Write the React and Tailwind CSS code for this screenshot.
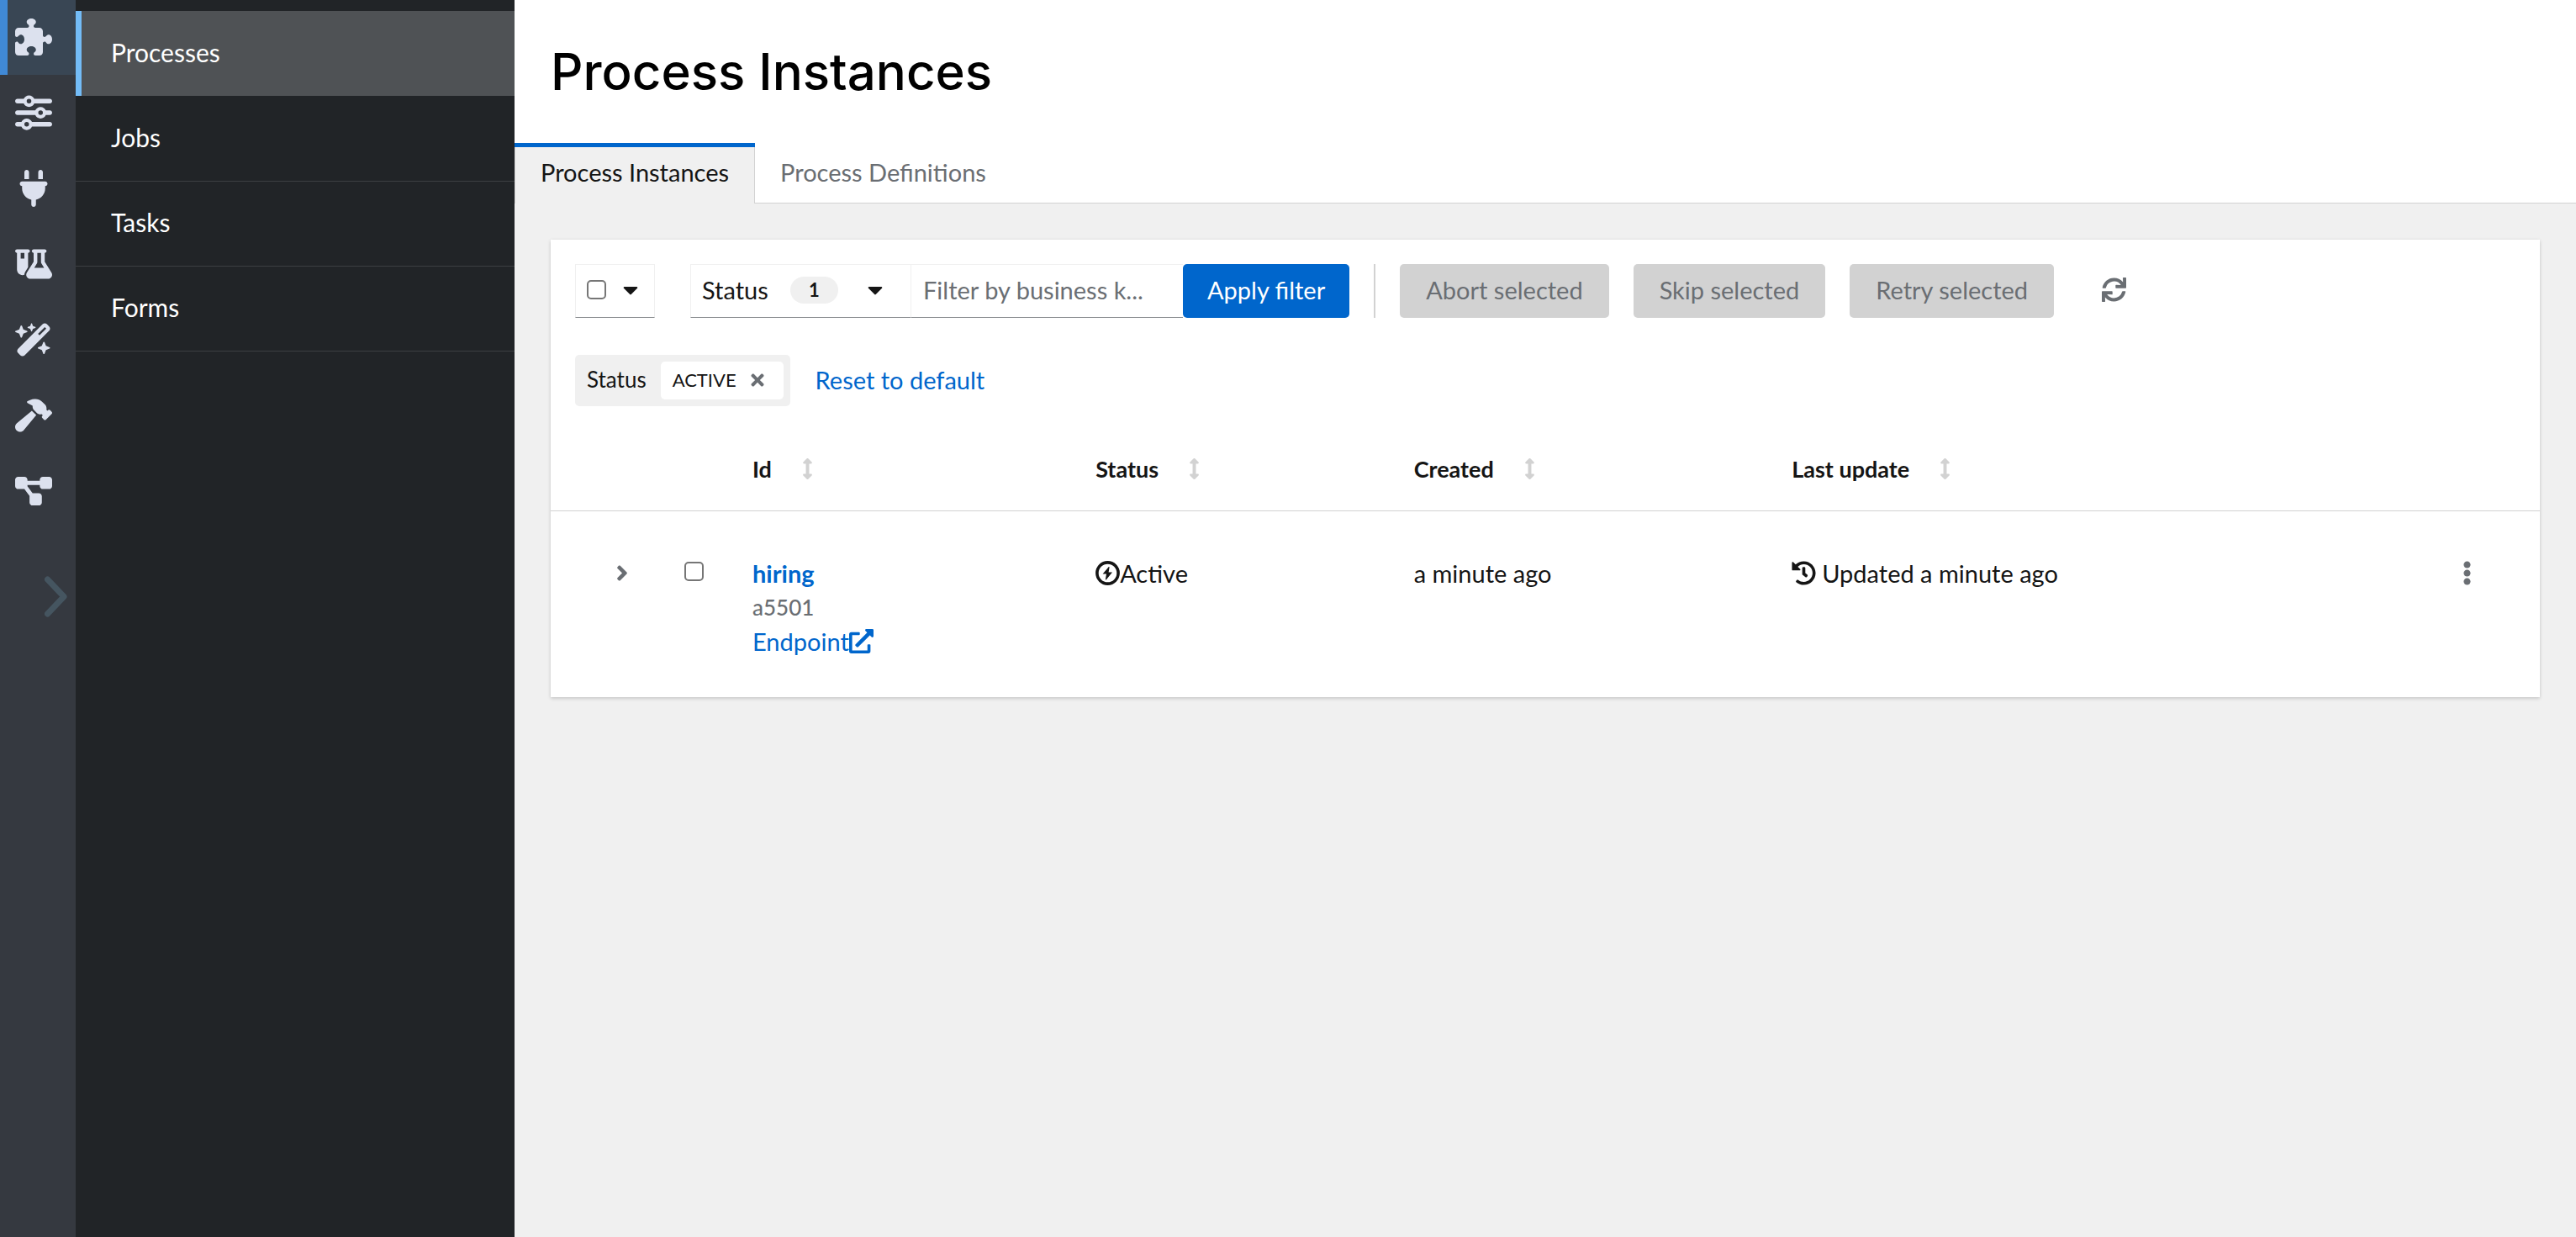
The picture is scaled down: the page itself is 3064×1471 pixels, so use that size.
import {
  FaPuzzlePiece,
  FaSliders,
  FaPlug,
  FaFlaskVial,
  FaWandMagicSparkles,
  FaHammer,
  FaDiagramProject,
} from 'react-icons/fa6';
import {
  FaAngleRight,
  FaArrowsAltV,
  FaCaretDown,
  FaEllipsisV,
  FaExternalLinkAlt,
  FaHistory,
  FaSync,
  FaTimes,
} from 'react-icons/fa';

const railItems = [
  { label: 'Extensions', Icon: FaPuzzlePiece, active: true },
  { label: 'Configuration', Icon: FaSliders },
  { label: 'Endpoints', Icon: FaPlug },
  { label: 'Continuous testing', Icon: FaFlaskVial },
  { label: 'Dev services', Icon: FaWandMagicSparkles },
  { label: 'Build metrics', Icon: FaHammer },
  { label: 'Workflows', Icon: FaDiagramProject },
];

function Rail() {
  return (
    <nav aria-label="Tools" className="flex w-[90px] shrink-0 flex-col bg-[#353940]">
      <ul className="flex flex-col gap-px">
        {railItems.map(({ label, Icon, active }) => (
          <li key={label}>
            <a
              href="#"
              aria-label={label}
              className={
                active
                  ? 'flex h-[89px] items-center bg-[#394654] pb-0.5 pl-[18px] text-[#dce1ee] shadow-[inset_9px_0_0_#4089d6]'
                  : 'flex h-[89px] items-center pb-0.5 pl-[18px] text-[#dce1ee]'
              }
            >
              <Icon className="h-11 w-11" />
            </a>
          </li>
        ))}
      </ul>
      <button type="button" aria-label="Expand" className="mt-14 mr-[10px] self-end">
        <svg width="27" height="49" viewBox="0 0 27 49" fill="none" stroke="#455560" strokeWidth="7" strokeLinecap="round" strokeLinejoin="round">
          <path d="M3.5 4 L23 24.5 L3.5 45" />
        </svg>
      </button>
    </nav>
  );
}

function SideNav() {
  return (
    <nav aria-label="Sections" className="w-[522px] shrink-0 bg-[#212427] pt-[13px] text-[30px] text-white">
      <ul>
        <li className="pb-px">
          <a href="#" aria-current="page" className="flex h-[101px] items-center bg-[#4f5255] pb-[3px] pl-[42px] shadow-[inset_7px_0_0_#73bcf7]">
            Processes
          </a>
        </li>
        {['Jobs', 'Tasks', 'Forms'].map((name) => (
          <li key={name}>
            <a href="#" className="flex h-[101px] items-center border-b border-[#3c3f42] pb-[3px] pl-[42px]">
              {name}
            </a>
          </li>
        ))}
      </ul>
    </nav>
  );
}

function Header() {
  return (
    <header className="bg-white">
      <h1 className="px-[43px] py-[43px] font-['Inter',sans-serif] text-[60px] leading-[84px] font-medium text-black">
        Process Instances
      </h1>
      <div role="tablist" className="flex h-[72px]">
        <button
          type="button"
          role="tab"
          aria-selected="true"
          className="relative flex items-center border-x border-[#d2d2d2] bg-[#f0f0f0] px-[30px] pb-[3px] before:absolute before:-inset-x-px before:top-0 before:h-[5px] before:bg-[#0066cc]"
        >
          Process Instances
        </button>
        <button
          type="button"
          role="tab"
          aria-selected="false"
          className="flex items-center border-b border-[#d2d2d2] px-[30px] pb-[2px] text-[#6a6e73]"
        >
          Process Definitions
        </button>
        <div className="grow border-b border-[#d2d2d2]" />
      </div>
    </header>
  );
}

function Check({ label }) {
  return (
    <input
      type="checkbox"
      aria-label={label}
      className="size-[23px] shrink-0 appearance-none rounded-[5px] border-2 border-[#767676] bg-white checked:bg-[#0066cc]"
    />
  );
}

function Toolbar() {
  return (
    <div className="flex h-16 items-stretch">
      <div className="flex w-[95px] items-center border border-[#f0f0f0] border-b-[#8a8d90] pb-[3px] pl-[13px]">
        <Check label="Select all" />
        <button type="button" aria-label="Select options" className="ml-5">
          <FaCaretDown className="h-[29px] w-[18px]" />
        </button>
      </div>
      <button
        type="button"
        aria-haspopup="listbox"
        className="ml-[42px] flex w-[263px] items-center border border-[#f0f0f0] border-b-[#8a8d90] pb-[3px] pl-[13px]"
      >
        Status
        <span className="ml-[26px] flex h-8 w-[57px] items-center justify-center rounded-full bg-[#f0f0f0] text-[22px] font-bold">1</span>
        <FaCaretDown className="mr-[33px] ml-auto h-[29px] w-[18px]" />
      </button>
      <input
        type="text"
        aria-label="Filter by business key"
        placeholder="Filter by business k..."
        className="w-[323px] border-t border-b border-t-[#f0f0f0] border-b-[#8a8d90] px-[14px] pb-[3px] placeholder:text-[#6a6e73] placeholder:opacity-100"
      />
      <button type="button" className="rounded-[5px] bg-[#0066cc] px-[29px] pb-[3px] text-white">
        Apply filter
      </button>
      <div className="mx-[29px] w-0.5 bg-[#d2d2d2]" />
      <div className="flex gap-[29px]">
        {['Abort selected', 'Skip selected', 'Retry selected'].map((label) => (
          <button key={label} type="button" disabled className="rounded-[5px] bg-[#d2d2d2] px-[31px] pb-[3px] text-[#6a6e73]">
            {label}
          </button>
        ))}
      </div>
      <button type="button" aria-label="Refresh" className="ml-[57px] pb-[3px] text-[#6a6e73]">
        <FaSync className="size-[29px]" />
      </button>
    </div>
  );
}

function Chips() {
  return (
    <div className="mt-11 flex items-center">
      <div className="flex h-[61px] items-center rounded-[5px] bg-[#f0f0f0] pr-2 pl-[14px]">
        <span className="pb-[3px] text-[26px]">Status</span>
        <span className="ml-[17px] flex h-[45px] items-center rounded-[5px] bg-white pr-[23px] pb-[2px] pl-[14px] text-[22px]">
          ACTIVE
          <button type="button" aria-label="Remove ACTIVE" className="ml-[17px] text-[#6a6e73]">
            <FaTimes className="h-[22px] w-4" />
          </button>
        </span>
      </div>
      <a href="#" className="ml-[30px] pb-[3px] text-[#0066cc]">
        Reset to default
      </a>
    </div>
  );
}

function RunningIcon() {
  return (
    <svg width="29" height="29" viewBox="0 0 29 29" fill="currentColor" aria-hidden="true">
      <circle cx="14.5" cy="14.5" r="12.6" fill="none" stroke="currentColor" strokeWidth="3.6" />
      <path d="M15.8 7 L8.6 15.6 H13 L11.9 22 Q12 22.8 12.9 22.2 L20 13.4 H15.6 L16.6 7.6 Q16.6 6.6 15.8 7 Z" />
    </svg>
  );
}

function InstancesTable() {
  return (
    <table className="mt-[25px] w-full table-fixed border-collapse text-left">
      <colgroup>
        <col className="w-32" />
        <col className="w-[98px]" />
        <col className="w-[17.25%]" />
        <col className="w-[16%]" />
        <col className="w-[19%]" />
        <col />
        <col className="w-[174px]" />
      </colgroup>
      <thead>
        <tr className="h-[99px] border-b border-[#d2d2d2]">
          <td />
          <td />
          {['Id', 'Status', 'Created', 'Last update'].map((name) => (
            <th key={name} scope="col" className="pl-[14px] text-[27px] font-bold">
              <button type="button" className="flex items-center gap-[36px]">
                {name}
                <FaArrowsAltV className="h-[25px] w-[13px] text-[#d2d2d2]" />
              </button>
            </th>
          ))}
          <td />
        </tr>
      </thead>
      <tbody>
        <tr className="align-top leading-[43px] [&>td]:pt-[52px] [&>td]:pb-[45px]">
          <td>
            <button type="button" aria-label="Expand row" className="mx-auto flex h-[43px] items-center pl-[42px] text-[#6a6e73]">
              <FaAngleRight className="h-[29px] w-[18px]" />
            </button>
          </td>
          <td>
            <div className="flex h-10 items-center pl-[31px]">
              <Check label="Select hiring" />
            </div>
          </td>
          <td className="pl-[14px]">
            <a href="#" className="block font-bold text-[#0066cc]">
              hiring
            </a>
            <div className="text-[26px] leading-[38px] font-medium text-[#6a6e73]">a5501</div>
            <a href="#" className="flex items-center text-[#0066cc]">
              Endpoint
              <FaExternalLinkAlt className="size-[29px]" />
            </a>
          </td>
          <td className="pl-[14px]">
            <div className="flex items-center">
              <RunningIcon />
              Active
            </div>
          </td>
          <td className="pl-[14px]">a minute ago</td>
          <td className="pl-[14px]">
            <div className="flex items-center gap-[7px]">
              <FaHistory className="size-[29px]" />
              Updated a minute ago
            </div>
          </td>
          <td>
            <button type="button" aria-label="Actions" className="mx-auto flex h-[43px] items-center text-[#6a6e73]">
              <FaEllipsisV className="h-[29px] w-[11px]" />
            </button>
          </td>
        </tr>
      </tbody>
    </table>
  );
}

export default function App() {
  return (
    <div className="flex min-h-screen bg-[#f0f0f0] font-['Lato',sans-serif] text-[29px] leading-[43px] text-[#151515]">
      <Rail />
      <SideNav />
      <div className="min-w-0 grow">
        <Header />
        <main className="p-[43px]">
          <section className="bg-white pt-[29px] shadow-[0_2px_4px_rgba(3,3,3,0.14),0_0_4px_rgba(3,3,3,0.06)]">
            <div className="px-[29px]">
              <Toolbar />
              <Chips />
            </div>
            <InstancesTable />
          </section>
        </main>
      </div>
    </div>
  );
}
